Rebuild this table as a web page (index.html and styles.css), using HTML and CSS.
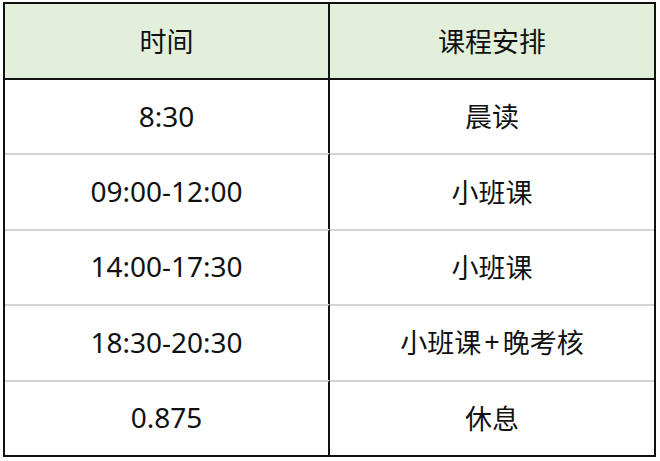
FILE: index.html
```html
<!DOCTYPE html>
<html lang="zh-CN">
<head>
<meta charset="utf-8">
<title>课程安排</title>
<link rel="stylesheet" href="styles.css">
</head>
<body>
<div class="sheet">
  <div class="table">
    <div class="cell head left">时间</div>
    <div class="cell head">课程安排</div>
    <div class="cell left first num">8:30</div>
    <div class="cell first">晨读</div>
    <div class="cell left num">09:00-12:00</div>
    <div class="cell">小班课</div>
    <div class="cell left num">14:00-17:30</div>
    <div class="cell">小班课</div>
    <div class="cell left num">18:30-20:30</div>
    <div class="cell">小班课<span class="plus">+</span>晚考核</div>
    <div class="cell left num">0.875</div>
    <div class="cell">休息</div>
  </div>
</div>
</body>
</html>
```
FILE: styles.css
```css
html, body {
  margin: 0;
  padding: 0;
  background: #ffffff;
}
.sheet {
  padding: 2px 0 0 3px;
}
.table {
  box-sizing: border-box;
  width: 653px;
  height: 455px;
  border: 2px solid #111111;
  display: grid;
  grid-template-columns: 325px 1fr;
  grid-template-rows: 74px repeat(5, 1fr);
  font-family: "Noto Sans", "Noto Sans CJK SC", sans-serif;
  font-size: 27px;
  color: #111111;
}
.cell {
  display: flex;
  align-items: center;
  justify-content: center;
  border-top: 2px solid #d4d4d4;
  padding-bottom: 2px;
}
.cell.num {
  font-size: 28px;
}
.cell.left {
  border-right: 2px solid #111111;
}
.cell.head {
  background: #e2efda;
  border-top: none;
}
.cell.first {
  border-top: 2px solid #111111;
}
.plus {
  padding: 0 3px;
}
```
